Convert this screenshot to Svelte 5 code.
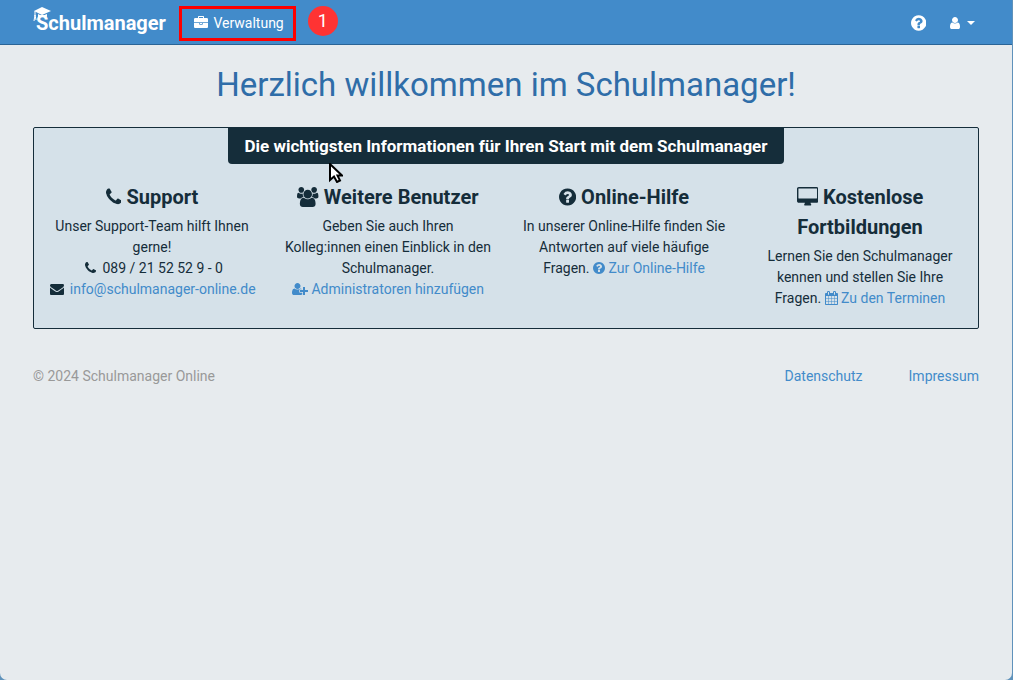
<script lang="ts">
  interface Icon {
    box: string;
    d: string;
  }

  const icons: Record<string, Icon> = {
    briefcase: {
      box: '0 0 1792 1792',
      d: 'M640 256h512v-128h-512v128zm1152 640v480q0 66-47 113t-113 47h-1472q-66 0-113-47t-47-113v-480h672v160q0 26 19 45t45 19h320q26 0 45-19t19-45v-160h672zm-768 0v128h-256v-128h256zm768-480v384h-1792v-384q0-66 47-113t113-47h352v-160q0-40 28-68t68-28h576q40 0 68 28t28 68v160h352q66 0 113 47t47 113z',
    },
    phone: {
      box: '192 0 1408 1792',
      d: 'M1600 1240q0 27-10 70.5t-21 68.5q-21 50-122 106-94 51-186 51-27 0-53-3.5t-57.5-12.5-47-14.5-55.5-20.5-49-18q-98-35-175-83-127-79-264-216t-216-264q-48-77-83-175-3-9-18-49t-20.5-55.5-14.5-47-12.5-57.5-3.5-53q0-92 51-186 56-101 106-122 25-11 68.5-21t70.5-10q14 0 21 3 18 6 53 76 11 19 30 54t35 63.5 31 53.5q3 4 17.5 25t21.5 35.5 7 28.5q0 20-28.5 50t-62 55-62 53-28.5 46q0 9 5 22.5t8.5 20.5 14 24 11.5 19q76 137 174 235t235 174q2 1 19 11.5t24 14 20.5 8.5 22.5 5q18 0 46-28.5t53-62 55-62 50-28.5q14 0 28.5 7t35.5 21.5 25 17.5q25 15 53.5 31t63.5 35 54 30q70 35 76 53 3 7 3 21z',
    },
    envelope: {
      box: '0 0 1792 1792',
      d: 'M1792 710v794q0 66-47 113t-113 47h-1472q-66 0-113-47t-47-113v-794q44 49 101 87 362 246 497 345 57 42 92.5 65.5t94.5 48 110 24.5h2q51 0 110-24.5t94.5-48 92.5-65.5q170-123 498-345 57-39 100-87zm0-294q0 79-49 151t-122 123q-376 261-468 325-10 7-42.5 31t-54 38.5-52 32.5-57.5 27-50 9h-2q-23 0-50-9t-57.5-27-52-32.5-54-38.5-42.5-31q-91-64-262-182.5t-205-142.5q-62-42-117-115.5t-55-136.5q0-78 41.5-130t118.5-52h1472q65 0 112.5 47t47.5 113z',
    },
    question: {
      box: '128 0 1536 1792',
      d: 'M1024 1376v-192q0-14-9-23t-23-9h-192q-14 0-23 9t-9 23v192q0 14 9 23t23 9h192q14 0 23-9t9-23zm256-672q0-88-55.5-163t-138.5-116-170-41q-243 0-371 213-15 24 8 42l132 100q7 6 19 6 16 0 25-12 53-68 86-92 34-24 86-24 48 0 85.5 26t37.5 59q0 38-20 61t-68 45q-63 28-115.5 86.5t-52.5 125.5v36q0 14 9 23t23 9h192q14 0 23-9t9-23q0-19 21.5-49.5t54.5-49.5q32-18 49-28.5t46-35 44.5-48 28-60.5 12.5-81zm384 192q0 209-103 385.5t-279.5 279.5-385.5 103-385.5-103-279.5-279.5-103-385.5 103-385.5 279.5-279.5 385.5-103 385.5 103 279.5 279.5 103 385.5z',
    },
    user: {
      box: '256 0 1280 1792',
      d: 'M1536 1399q0 109-62.5 187t-150.5 78h-854q-88 0-150.5-78t-62.5-187q0-85 8.5-160.5t31.5-152 58.5-131 94-89 134.5-34.5q131 128 313 128t313-128q76 0 134.5 34.5t94 89 58.5 131 31.5 152 8.5 160.5zm-256-887q0 159-112.5 271.5t-271.5 112.5-271.5-112.5-112.5-271.5 112.5-271.5 271.5-112.5 271.5 112.5 112.5 271.5z',
    },
    users: {
      box: '0 0 1920 1792',
      d: 'M593 896q-162 5-265 128h-134q-82 0-138-40.5t-56-118.5q0-353 124-353 6 0 43.5 21t97.5 42.5 119 21.5q67 0 133-23-5 37-5 66 0 139 81 256zm1071 637q0 120-73 189.5t-194 69.5h-874q-121 0-194-69.5t-73-189.5q0-53 3.5-103.5t14-109 26.5-108.5 43-97.5 62-81 85.5-53.5 111.5-20q10 0 43 21.5t73 48 107 48 135 21.5 135-21.5 107-48 73-48 43-21.5q61 0 111.5 20t85.5 53.5 62 81 43 97.5 26.5 108.5 14 109 3.5 103.5zm-1024-1277q0 106-75 181t-181 75-181-75-75-181 75-181 181-75 181 75 75 181zm704 384q0 159-112.5 271.5t-271.5 112.5-271.5-112.5-112.5-271.5 112.5-271.5 271.5-112.5 271.5 112.5 112.5 271.5zm576 225q0 78-56 118.5t-138 40.5h-134q-103-123-265-128 81-117 81-256 0-29-5-66 66 23 133 23 59 0 119-21.5t97.5-42.5 43.5-21q124 0 124 353zm-128-609q0 106-75 181t-181 75-181-75-75-181 75-181 181-75 181 75 75 181z',
    },
    userPlus: {
      box: '0 0 2048 1792',
      d: 'M704 896q-159 0-271.5-112.5t-112.5-271.5 112.5-271.5 271.5-112.5 271.5 112.5 112.5 271.5-112.5 271.5-271.5 112.5zm960 128h352q13 0 22.5 9.5t9.5 22.5v192q0 13-9.5 22.5t-22.5 9.5h-352v352q0 13-9.5 22.5t-22.5 9.5h-192q-13 0-22.5-9.5t-9.5-22.5v-352h-352q-13 0-22.5-9.5t-9.5-22.5v-192q0-13 9.5-22.5t22.5-9.5h352v-352q0-13 9.5-22.5t22.5-9.5h192q13 0 22.5 9.5t9.5 22.5v352zm-736 224q0 52 38 90t90 38h256v238q-68 50-171 50h-874q-121 0-194-69t-73-190q0-53 3.5-103.5t14-109 26.5-108.5 43-97.5 62-81 85.5-53.5 111.5-20q19 0 39 17 79 61 154.5 91.5t164.5 30.5 164.5-30.5 154.5-91.5q20-17 39-17 132 0 217 96h-223q-52 0-90 38t-38 90v192z',
    },
    desktop: {
      box: '0 0 1920 1792',
      d: 'M1792 992v-832q0-13-9.5-22.5t-22.5-9.5h-1600q-13 0-22.5 9.5t-9.5 22.5v832q0 13 9.5 22.5t22.5 9.5h1600q13 0 22.5-9.5t9.5-22.5zm128-832v1088q0 66-47 113t-113 47h-544q0 37 16 77.5t32 71 16 43.5q0 26-19 45t-45 19h-512q-26 0-45-19t-19-45q0-14 16-44t32-70 16-78h-544q-66 0-113-47t-47-113v-1088q0-66 47-113t113-47h1600q66 0 113 47t47 113z',
    },
    calendar: {
      box: '64 0 1664 1792',
      d: 'M192 1664h288v-288h-288v288zm352 0h320v-288h-320v288zm-352-352h288v-320h-288v320zm352 0h320v-320h-320v320zm-352-384h288v-288h-288v288zm736 736h320v-288h-320v288zm-384-736h320v-288h-320v288zm768 736h288v-288h-288v288zm-384-352h320v-320h-320v320zm-352-864v-288q0-13-9.5-22.5t-22.5-9.5h-64q-13 0-22.5 9.5t-9.5 22.5v288q0 13 9.5 22.5t22.5 9.5h64q13 0 22.5-9.5t9.5-22.5zm736 864h288v-320h-288v320zm-384-384h320v-288h-320v288zm384 0h288v-288h-288v288zm32-480v-288q0-13-9.5-22.5t-22.5-9.5h-64q-13 0-22.5 9.5t-9.5 22.5v288q0 13 9.5 22.5t22.5 9.5h64q13 0 22.5-9.5t9.5-22.5zm384-64v1280q0 52-38 90t-90 38h-1408q-52 0-90-38t-38-90v-1280q0-52 38-90t90-38h128v-96q0-66 47-113t113-47h64q66 0 113 47t47 113v96h384v-96q0-66 47-113t113-47h64q66 0 113 47t47 113v96h128q52 0 90 38t38 90z',
    },
  };
</script>

{#snippet icon(name: string)}
  <svg class="icon" viewBox={icons[name].box} aria-hidden="true"><path d={icons[name].d} /></svg>
{/snippet}

<div class="page">
  <header class="navbar">
    <a class="brand" href="#/">
      <svg class="cap" viewBox="0 0 18 15" aria-hidden="true">
        <path d="M9 0 18 4 9 8 1 4z" />
        <path d="M5 7l4 2 5-2v3q-2-1-4.500-1t-4.500 2z" />
        <path d="M2 4v5M2 8l-1 6M2 8l1 5" fill="none" stroke="#fff" />
      </svg>
      Schulmanager
    </a>
    <a class="nav-link marked" href="#/verwaltung">{@render icon('briefcase')} Verwaltung</a>
    <span class="step">1</span>
    <nav class="tools">
      <a class="help" href="#/hilfe" aria-label="Hilfe">{@render icon('question')}</a>
      <button class="account" type="button" aria-label="Benutzerkonto">
        {@render icon('user')}
        <span class="caret"></span>
      </button>
    </nav>
  </header>

  <main>
    <h1>Herzlich willkommen im Schulmanager!</h1>

    <section class="welcome">
      <h2>
        Die wichtigsten Informationen für Ihren Start mit dem Schulmanager
        <svg class="pointer" viewBox="0 0 14 20" aria-hidden="true">
          <path d="M1 1v16l4-3.500 3 5.500 3-1.500-2.500-5h4.500z" />
        </svg>
      </h2>
      <div class="columns">
        <article>
          <h3>{@render icon('phone')} Support</h3>
          <p>Unser Support-Team hilft Ihnen gerne!</p>
          <p class="contact"><span class="fixed">{@render icon('phone')}</span> 089 / 21 52 52 9 - 0</p>
          <p class="contact">
            <span class="fixed">{@render icon('envelope')}</span>
            <a href="mailto:info@schulmanager-online.de">info@schulmanager-online.de</a>
          </p>
        </article>
        <article>
          <h3>{@render icon('users')} Weitere Benutzer</h3>
          <p>Geben Sie auch Ihren Kolleg:innen einen Einblick in den Schulmanager.</p>
          <p><a href="#/administratoren">{@render icon('userPlus')} Administratoren hinzufügen</a></p>
        </article>
        <article>
          <h3>{@render icon('question')} Online-Hilfe</h3>
          <p>
            In unserer Online-Hilfe finden Sie Antworten auf viele häufige Fragen.
            <a href="#/online-hilfe">{@render icon('question')} Zur Online-Hilfe</a>
          </p>
        </article>
        <article>
          <h3>{@render icon('desktop')} Kostenlose Fortbildungen</h3>
          <p>
            Lernen Sie den Schulmanager kennen und stellen Sie Ihre Fragen.
            <a href="#/termine">{@render icon('calendar')} Zu den Terminen</a>
          </p>
        </article>
      </div>
    </section>

    <footer>
      <span>© 2024 Schulmanager Online</span>
      <nav>
        <a href="#/datenschutz">Datenschutz</a>
        <a href="#/impressum">Impressum</a>
      </nav>
    </footer>
  </main>
</div>

<style>
  :global(body) {
    background: #5f92bb;
  }

  .page {
    box-sizing: border-box;
    min-height: 100vh;
    margin-right: 1px;
    overflow: hidden;
    border-radius: 0 0 7px 7px;
    background: #e7ebee;
    color: #152d3a;
    font: 14px/21px Roboto, sans-serif;
  }

  a {
    color: #428bca;
    text-decoration: none;
  }

  .icon {
    height: 1em;
    vertical-align: -2px;
    fill: currentColor;
  }

  .navbar {
    display: flex;
    align-items: center;
    box-sizing: border-box;
    height: 45px;
    padding: 2px 37px 0 36px;
    border-bottom: 1px solid #2a6496;
    background: #428bca;
    color: #fff;
  }

  .navbar a {
    color: #fff;
  }

  .brand {
    position: relative;
    font-size: 20px;
    font-weight: 700;
    line-height: 24px;
  }

  .cap {
    position: absolute;
    top: -4px;
    left: -3px;
    width: 18px;
    height: 15px;
    fill: #fff;
  }

  .nav-link {
    margin-left: 13px;
    padding: 4px 9px 4px 12px;
  }

  .marked {
    border: 3px solid #f00;
  }

  .nav-link .icon {
    margin-right: 2px;
  }

  .step {
    width: 30px;
    margin: 0 0 5px 12px;
    border-radius: 50%;
    background: #f33;
    font-size: 18px;
    line-height: 30px;
    text-align: center;
  }

  .tools {
    display: flex;
    align-items: center;
    gap: 24px;
    margin-left: auto;
  }

  .help {
    font-size: 18px;
  }

  .account {
    display: flex;
    align-items: center;
    gap: 7px;
    padding: 0;
    border: 0;
    background: none;
    color: #fff;
    font-size: 14px;
  }

  .caret {
    border: 4px solid transparent;
    border-top-color: #fff;
    border-bottom: 0;
  }

  main {
    padding: 20px 33px;
  }

  h1 {
    margin: 0 0 22px;
    color: #2f6da8;
    font-size: 33px;
    font-weight: 400;
    line-height: 40px;
    text-align: center;
  }

  .welcome {
    padding: 0 0 19px;
    border: 1px solid #152d3a;
    border-radius: 2px;
    background: #d5e1e9;
    text-align: center;
  }

  h2 {
    position: relative;
    width: fit-content;
    margin: 0 auto 18px;
    padding: 3px 16px;
    border-radius: 0 0 4px 4px;
    background: #152d3a;
    color: #fff;
    font-size: 17px;
    font-weight: 700;
    line-height: 30px;
  }

  .pointer {
    position: absolute;
    top: 35px;
    left: 101px;
    width: 14px;
    height: 20px;
    fill: #fff;
    stroke: #000;
    stroke-width: 2;
  }

  .columns {
    display: grid;
    grid-template-columns: repeat(4, minmax(0, 1fr));
  }

  article {
    padding: 0 14px;
  }

  h3 {
    margin: 0 0 4px;
    font-size: 20px;
    font-weight: 700;
    line-height: 30px;
  }

  h3 .icon {
    vertical-align: -3px;
  }

  p {
    margin: 0;
  }

  .contact {
    white-space: nowrap;
  }

  .fixed {
    display: inline-block;
    width: 18px;
    text-align: center;
  }

  footer {
    display: flex;
    justify-content: space-between;
    margin-top: 37px;
    color: #999;
  }

  footer nav {
    display: flex;
    gap: 46px;
  }
</style>
